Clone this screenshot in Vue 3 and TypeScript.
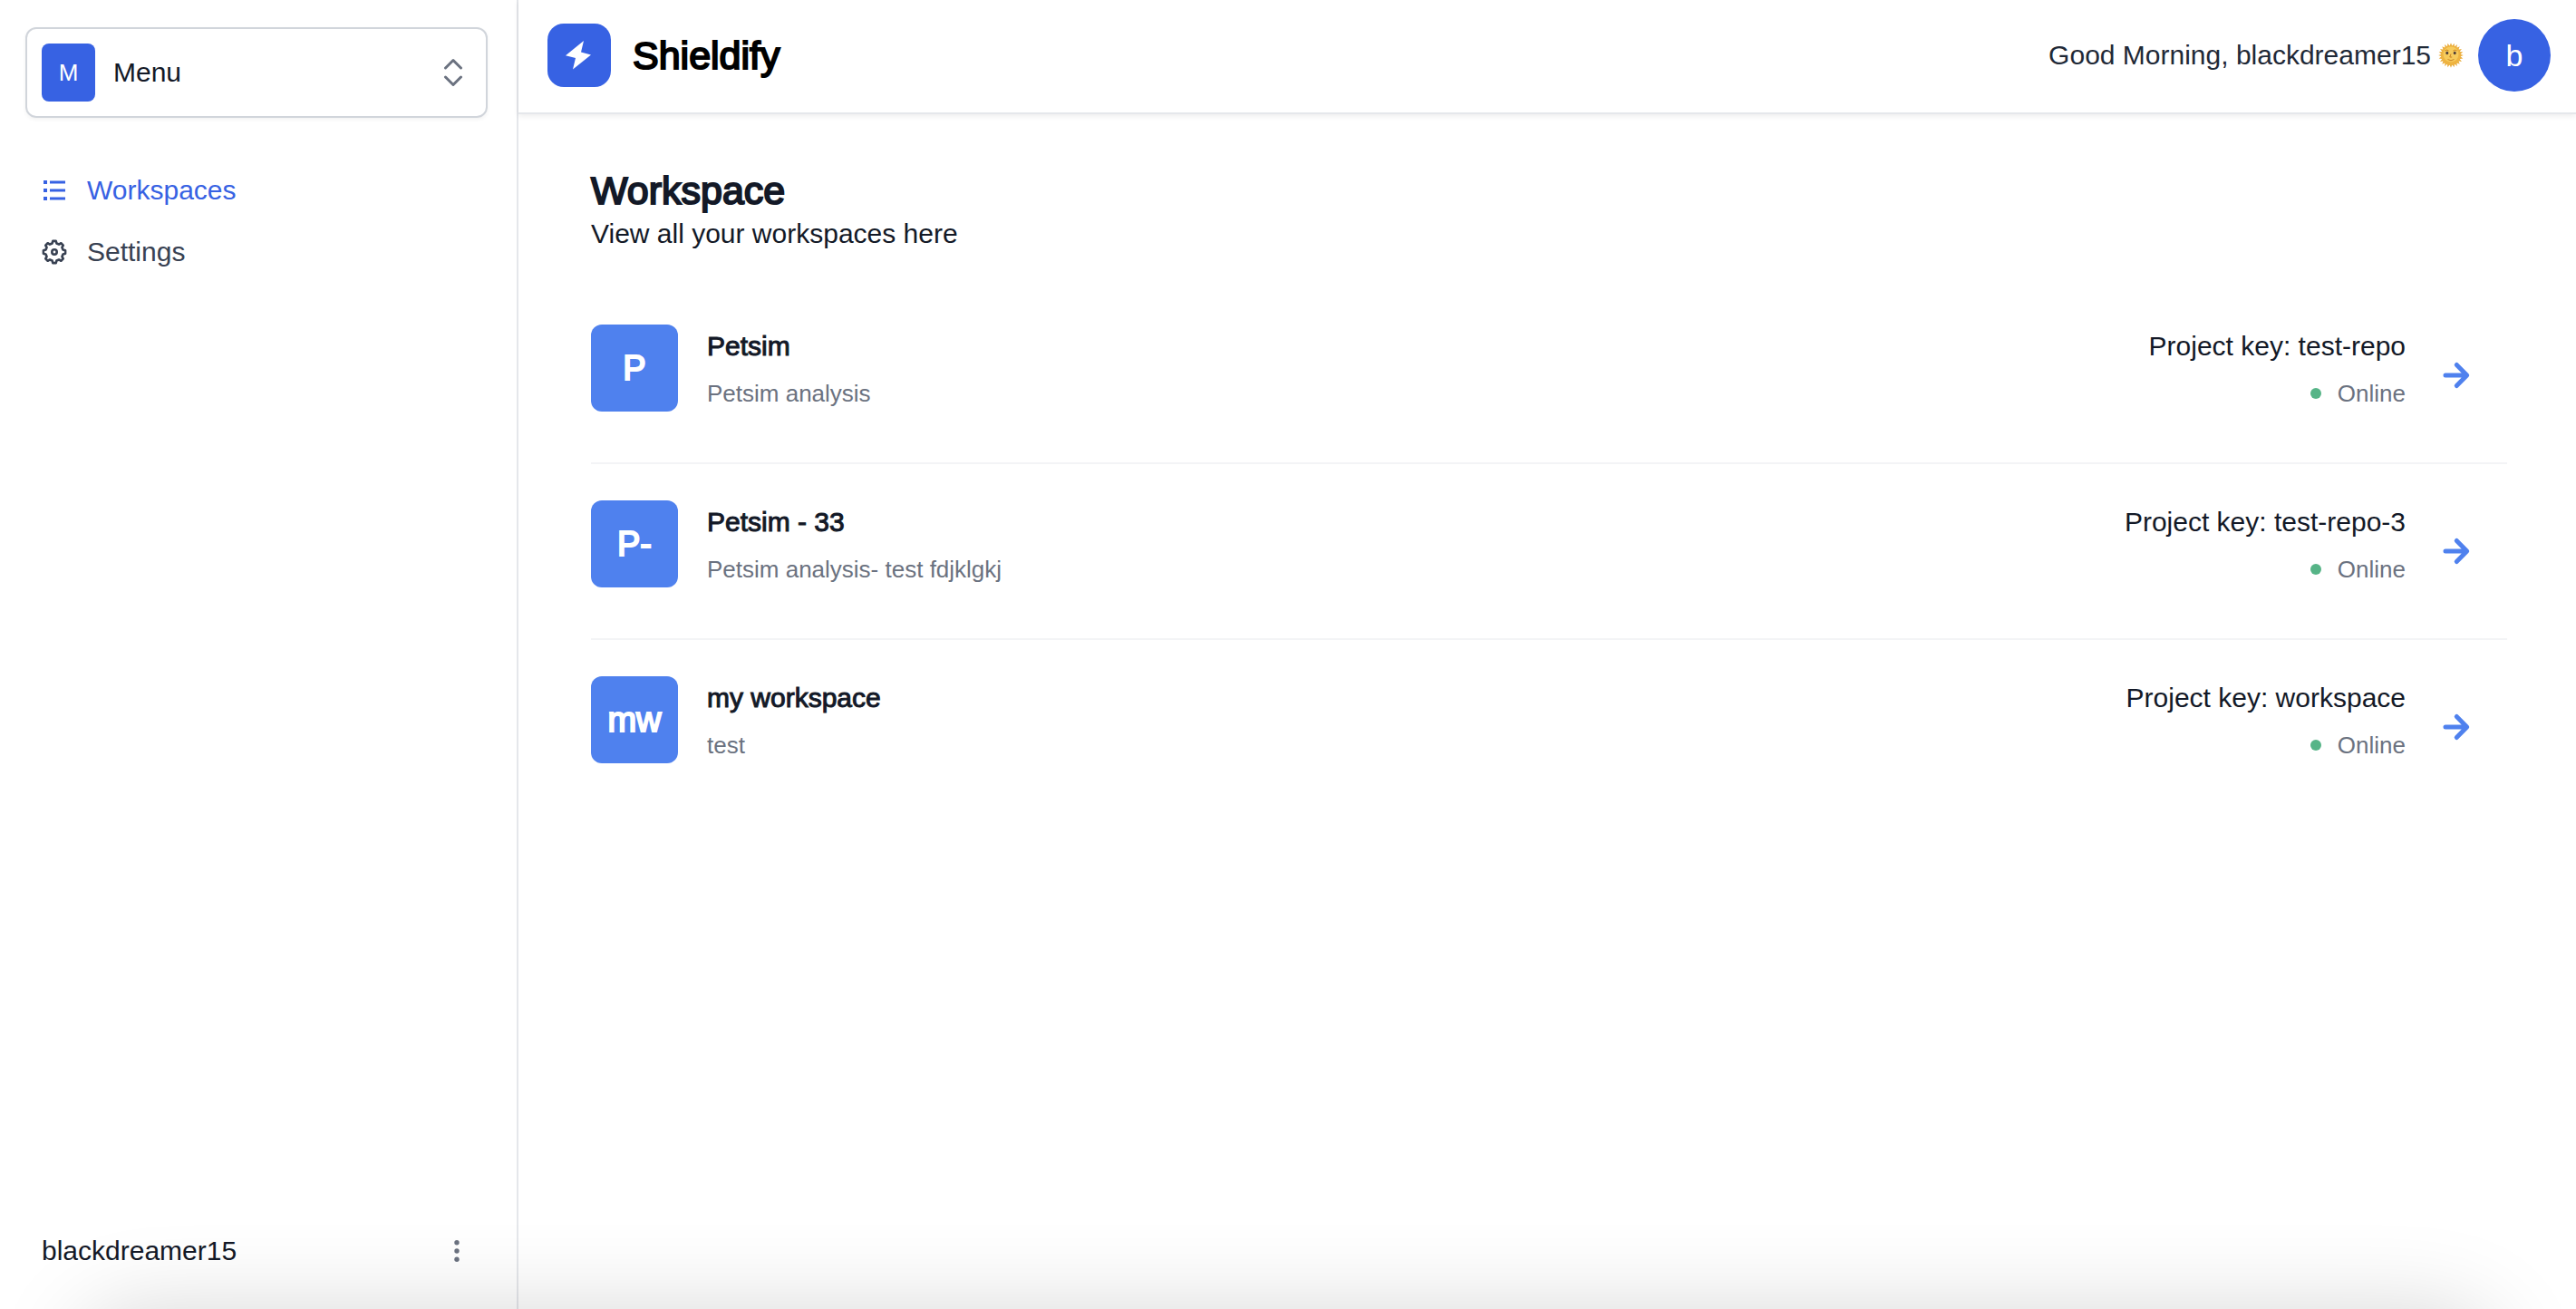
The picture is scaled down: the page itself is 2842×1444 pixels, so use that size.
<script setup lang="ts">
interface NavItem {
  label: string
  icon: 'list' | 'gear'
  active: boolean
}

interface Workspace {
  initials: string
  name: string
  description: string
  projectKey: string
  status: string
}

const username = 'blackdreamer15'

const navItems: NavItem[] = [
  { label: 'Workspaces', icon: 'list', active: true },
  { label: 'Settings', icon: 'gear', active: false },
]

const workspaces: Workspace[] = [
  { initials: 'P', name: 'Petsim', description: 'Petsim analysis', projectKey: 'test-repo', status: 'Online' },
  { initials: 'P-', name: 'Petsim - 33', description: 'Petsim analysis- test fdjklgkj', projectKey: 'test-repo-3', status: 'Online' },
  { initials: 'mw', name: 'my workspace', description: 'test', projectKey: 'workspace', status: 'Online' },
]

// Outline of an eight-toothed gear centred on (16, 16).
function gearPath(): string {
  const points: string[] = []
  const step = Math.PI / 4
  for (let i = 0; i < 8; i++) {
    const mid = i * step - Math.PI / 2
    const corners: [number, number][] = [
      [-0.25, 9.8],
      [-0.14, 12.2],
      [0.14, 12.2],
      [0.25, 9.8],
    ]
    for (const [offset, radius] of corners) {
      const x = 16 + radius * Math.cos(mid + offset)
      const y = 16 + radius * Math.sin(mid + offset)
      points.push(`${x.toFixed(2)} ${y.toFixed(2)}`)
    }
  }
  return `M${points.join('L')}Z`
}

// Rays of the sun emoji, as a many-pointed star centred on (14, 14).
function sunRays(): string {
  const points: string[] = []
  const count = 24
  for (let i = 0; i < count * 2; i++) {
    const radius = i % 2 === 0 ? 13.8 : 10.4
    const angle = (i * Math.PI) / count
    points.push(`${(14 + radius * Math.cos(angle)).toFixed(2)},${(14 + radius * Math.sin(angle)).toFixed(2)}`)
  }
  return points.join(' ')
}

const gear = gearPath()
const rays = sunRays()
</script>

<template>
  <div class="page">
    <aside class="sidebar">
      <button class="switcher" type="button" aria-haspopup="menu">
        <span class="switcher-badge">M</span>
        <span class="switcher-label">Menu</span>
        <svg class="switcher-icon" viewBox="0 0 24 36" aria-hidden="true">
          <path d="M3.500 13 12 4.500 20.500 13M3.500 23 12 31.500 20.500 23" />
        </svg>
      </button>

      <nav class="nav" aria-label="Main">
        <a
          v-for="item in navItems"
          :key="item.label"
          href="#"
          class="nav-link"
          :class="{ active: item.active }"
        >
          <svg v-if="item.icon === 'list'" class="nav-icon" viewBox="0 0 32 32" aria-hidden="true">
            <path
              fill="currentColor"
              d="M4 5h4v4H4zM4 14h4v4H4zM4 23h4v4H4zM11 5.500h17v3H11zM11 14.500h17v3H11zM11 23.500h17v3H11z"
            />
          </svg>
          <svg v-else class="nav-icon gear" viewBox="0 0 32 32" aria-hidden="true">
            <path :d="gear" />
            <circle cx="16" cy="16" r="2.700" />
          </svg>
          <span>{{ item.label }}</span>
        </a>
      </nav>

      <div class="account">
        <span>{{ username }}</span>
        <button class="account-more" type="button" aria-label="Account options">
          <svg viewBox="0 0 32 32" aria-hidden="true">
            <circle cx="16" cy="6.700" r="2.700" />
            <circle cx="16" cy="16" r="2.700" />
            <circle cx="16" cy="25.300" r="2.700" />
          </svg>
        </button>
      </div>
    </aside>

    <div class="content">
      <header class="topbar">
        <div class="brand">
          <svg class="logo" viewBox="0 0 70 70" aria-hidden="true">
            <rect width="70" height="70" rx="18" />
            <path d="M40 19 20 35.200 31 38 28 50.500 48 34.500 37 31.500z" />
          </svg>
          <span class="brand-name">Shieldify</span>
        </div>
        <div class="greeting">
          <span>Good Morning, {{ username }}</span>
          <svg class="sun" viewBox="0 0 28 28" role="img" aria-label="Sun with face">
            <polygon :points="rays" fill="#e9ab3a" />
            <circle cx="14" cy="14" r="10.800" fill="#eeb340" />
            <circle cx="14" cy="13" r="8.500" fill="#f7cb5c" />
            <ellipse cx="9.800" cy="11.500" rx="1.500" ry="1.700" fill="#4f3f3a" />
            <ellipse cx="18.200" cy="11.500" rx="1.500" ry="1.700" fill="#4f3f3a" />
            <path
              d="M7.500 9q2-1.800 4 0M16.500 9q2-1.800 4 0M14 12.500l-1.200 3.500h2.400M10.500 18.500q3.500 2.600 7 0"
              fill="none"
              stroke="#c98222"
            />
          </svg>
          <button class="avatar" type="button" aria-label="Your profile">b</button>
        </div>
      </header>

      <main class="main">
        <h1 class="title">Workspace</h1>
        <p class="subtitle">View all your workspaces here</p>

        <ul class="list">
          <li v-for="workspace in workspaces" :key="workspace.projectKey" class="row">
            <div class="row-body">
              <span class="initials">{{ workspace.initials }}</span>
              <div class="info">
                <h2 class="name">{{ workspace.name }}</h2>
                <p class="muted">{{ workspace.description }}</p>
              </div>
              <div class="info end">
                <p class="key">Project key: {{ workspace.projectKey }}</p>
                <p class="muted status"><i class="dot"></i>{{ workspace.status }}</p>
              </div>
            </div>
            <a href="#" class="open" :aria-label="`Open ${workspace.name}`">
              <svg viewBox="0 0 32 32" aria-hidden="true">
                <path d="M4 16H27M16.300 4.500 27.700 16 16.300 27.500" />
              </svg>
            </a>
          </li>
        </ul>
      </main>
    </div>
  </div>
</template>

<style>
body {
  margin: 0;
  background: #fff;
}
</style>

<style scoped>
.page {
  position: relative;
  display: flex;
  min-height: 100vh;
  overflow: hidden;
  background: #fff;
  color: #131927;
  font: 30px/48px "Liberation Sans", Arial, sans-serif;
}

/* Soft shade that rises from the lower edge of the window */
.page::after {
  content: "";
  position: absolute;
  right: 90px;
  bottom: -204px;
  left: 90px;
  height: 200px;
  border-radius: 60px;
  box-shadow: 0 0 100px rgba(0, 0, 0, 0.17);
  pointer-events: none;
}

h1,
h2,
p,
ul {
  margin: 0;
  padding: 0;
}

button {
  margin: 0;
  padding: 0;
  border: 0;
  background: none;
  color: inherit;
  font: inherit;
  cursor: pointer;
}

.sidebar {
  box-sizing: border-box;
  display: flex;
  flex: none;
  flex-direction: column;
  width: 572px;
  padding: 30px 32px 40px 28px;
  border-right: 2px solid #e5e7eb;
}

.switcher {
  display: flex;
  align-items: center;
  padding: 16px;
  border: 2px solid #d1d5db;
  border-radius: 12px;
  box-shadow: 0 2px 4px rgba(0, 0, 0, 0.05);
}

.switcher-badge {
  width: 59px;
  border-radius: 8px;
  background: #3762e3;
  color: #fff;
  font-size: 26px;
  line-height: 64px;
}

.switcher-label {
  flex: 1;
  margin-left: 20px;
  text-align: left;
}

.switcher-icon {
  width: 24px;
  height: 36px;
  margin-right: 8px;
  fill: none;
  stroke: #6b7280;
  stroke-width: 3;
  stroke-linecap: round;
  stroke-linejoin: round;
}

.nav {
  display: flex;
  flex-direction: column;
  margin-top: 46px;
}

.nav-link {
  display: flex;
  align-items: center;
  gap: 20px;
  padding-left: 16px;
  color: #384152;
  line-height: 68px;
  text-decoration: none;
}

.nav-link.active {
  color: #3762e3;
}

.nav-icon {
  width: 32px;
  height: 32px;
}

.gear {
  fill: none;
  stroke: currentColor;
  stroke-width: 2.6;
  stroke-linejoin: round;
}

.account {
  display: flex;
  align-items: center;
  justify-content: space-between;
  margin-top: auto;
  padding: 0 18px;
}

.account-more {
  width: 32px;
  height: 32px;
}

.account-more svg {
  display: block;
  fill: #6b7280;
}

.content {
  flex: 1;
  min-width: 0;
}

.topbar {
  display: flex;
  align-items: center;
  justify-content: space-between;
  padding: 21px 28px 23px 32px;
  border-bottom: 2px solid #e5e7eb;
  box-shadow: 0 2px 6px rgba(0, 0, 0, 0.08);
}

.brand {
  display: flex;
  align-items: center;
  gap: 24px;
}

.logo {
  width: 70px;
  height: 70px;
  fill: #3762e3;
}

.logo path {
  fill: #fff;
}

.brand-name {
  color: #000;
  font-size: 43px;
  -webkit-text-stroke: 2px currentColor;
}

.greeting {
  display: flex;
  align-items: center;
  color: #1f2937;
}

.sun {
  width: 28px;
  height: 28px;
  margin: 0 16px 0 8px;
}

.avatar {
  width: 80px;
  height: 80px;
  border-radius: 50%;
  background: #3762e3;
  color: #fff;
  font-size: 34px;
}

.main {
  padding: 60px 76px 60px 80px;
}

.title {
  font-size: 43px;
  font-weight: 400;
  -webkit-text-stroke: 2px currentColor;
}

.list {
  margin-top: 36px;
  list-style: none;
}

.row {
  display: flex;
  align-items: center;
}

.row + .row {
  border-top: 2px solid #f3f4f6;
}

.row-body {
  display: flex;
  align-items: flex-start;
  flex: 1;
  padding: 40px 0 52px;
}

.initials {
  width: 96px;
  margin-right: 32px;
  border-radius: 12px;
  background: #4f81ee;
  color: #fff;
  font-size: 38px;
  line-height: 96px;
  text-align: center;
  -webkit-text-stroke: 2px currentColor;
}

.info {
  display: flex;
  flex-direction: column;
  gap: 4px;
}

.end {
  align-items: flex-end;
  margin-left: auto;
}

.name {
  font-size: 30px;
  font-weight: 400;
  -webkit-text-stroke: 1px currentColor;
}

.muted {
  color: #6b7280;
  font-size: 26px;
}

.status {
  display: flex;
  align-items: center;
  gap: 18px;
}

.dot {
  width: 12px;
  height: 12px;
  border-radius: 50%;
  background: #56b487;
}

.open {
  width: 32px;
  height: 32px;
  margin: 0 40px;
}

.open svg {
  display: block;
  fill: none;
  stroke: #4f81ee;
  stroke-width: 5;
  stroke-linecap: round;
  stroke-linejoin: round;
}
</style>
